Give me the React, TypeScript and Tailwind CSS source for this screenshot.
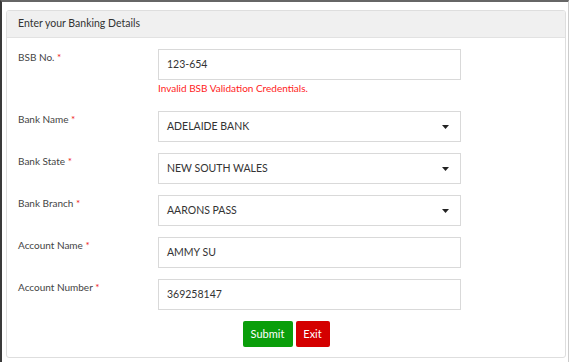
import React from "react";

const font = { fontFamily: 'Lato, "Open Sans", sans-serif' };

function Label({ text }: { text: string }) {
  return (
    <div className="w-[140px] shrink-0 pt-[1px] text-[10px] leading-[15px] text-[#444]">
      {text} <span className="text-[#e22]">*</span>
    </div>
  );
}

function TextBox({ value }: { value: string }) {
  return (
    <div className="flex h-[31px] w-[303px] items-center border border-[#d9d9d9] px-[8px] text-[10.5px] text-[#333]">
      {value}
    </div>
  );
}

function SelectBox({ value }: { value: string }) {
  return (
    <div className="flex h-[31px] w-[303px] items-center justify-between border border-[#d9d9d9] pl-[8px] pr-[11px] text-[10.5px] text-[#333]">
      <span>{value}</span>
      <svg width="7" height="4" viewBox="0 0 7 4">
        <path d="M0 0 H7 L3.5 4 Z" fill="#222" />
      </svg>
    </div>
  );
}

type Field = { label: string; value: string; select?: boolean };

const fields: Field[] = [
  { label: "Bank Name", value: "ADELAIDE BANK", select: true },
  { label: "Bank State", value: "NEW SOUTH WALES", select: true },
  { label: "Bank Branch", value: "AARONS PASS", select: true },
  { label: "Account Name", value: "AMMY SU" },
  { label: "Account Number", value: "369258147" },
];

export default function App() {
  return (
    <div
      className="h-[362px] w-[569px] border-l-2 border-t-2 border-r border-l-[#3a3a3a] border-t-[#666] border-r-[#ccc] bg-white"
      style={font}
    >
      <div className="ml-[4px] mt-[8px] h-[348px] w-[560px] overflow-hidden rounded-[3px] border border-[#dedede]">
        <div className="flex h-[27px] items-center border-b border-[#e2e2e2] bg-[#f0f0f0] px-[11px] text-[10.5px] text-[#333]">
          Enter your Banking Details
        </div>
        <div className="flex flex-col pl-[11px] pt-[11px]">
          <div className="flex">
            <Label text="BSB No." />
            <div className="flex flex-col">
              <TextBox value="123-654" />
              <div className="mt-[1px] text-[10px] leading-[15px] text-[#f22]">
                Invalid BSB Validation Credentials.
              </div>
            </div>
          </div>
          <div className="mt-[15px] flex flex-col gap-[11px]">
            {fields.map((f) => (
              <div key={f.label} className="flex">
                <Label text={f.label} />
                {f.select ? <SelectBox value={f.value} /> : <TextBox value={f.value} />}
              </div>
            ))}
          </div>
        </div>
        <div className="mt-[11px] flex justify-center gap-[3px]">
          <button className="h-[26px] w-[50px] rounded-[2px] bg-[#0a9e0a] text-[11px] text-white">
            Submit
          </button>
          <button className="h-[26px] w-[34px] rounded-[2px] bg-[#d40000] text-[11px] text-white">
            Exit
          </button>
        </div>
      </div>
    </div>
  );
}
